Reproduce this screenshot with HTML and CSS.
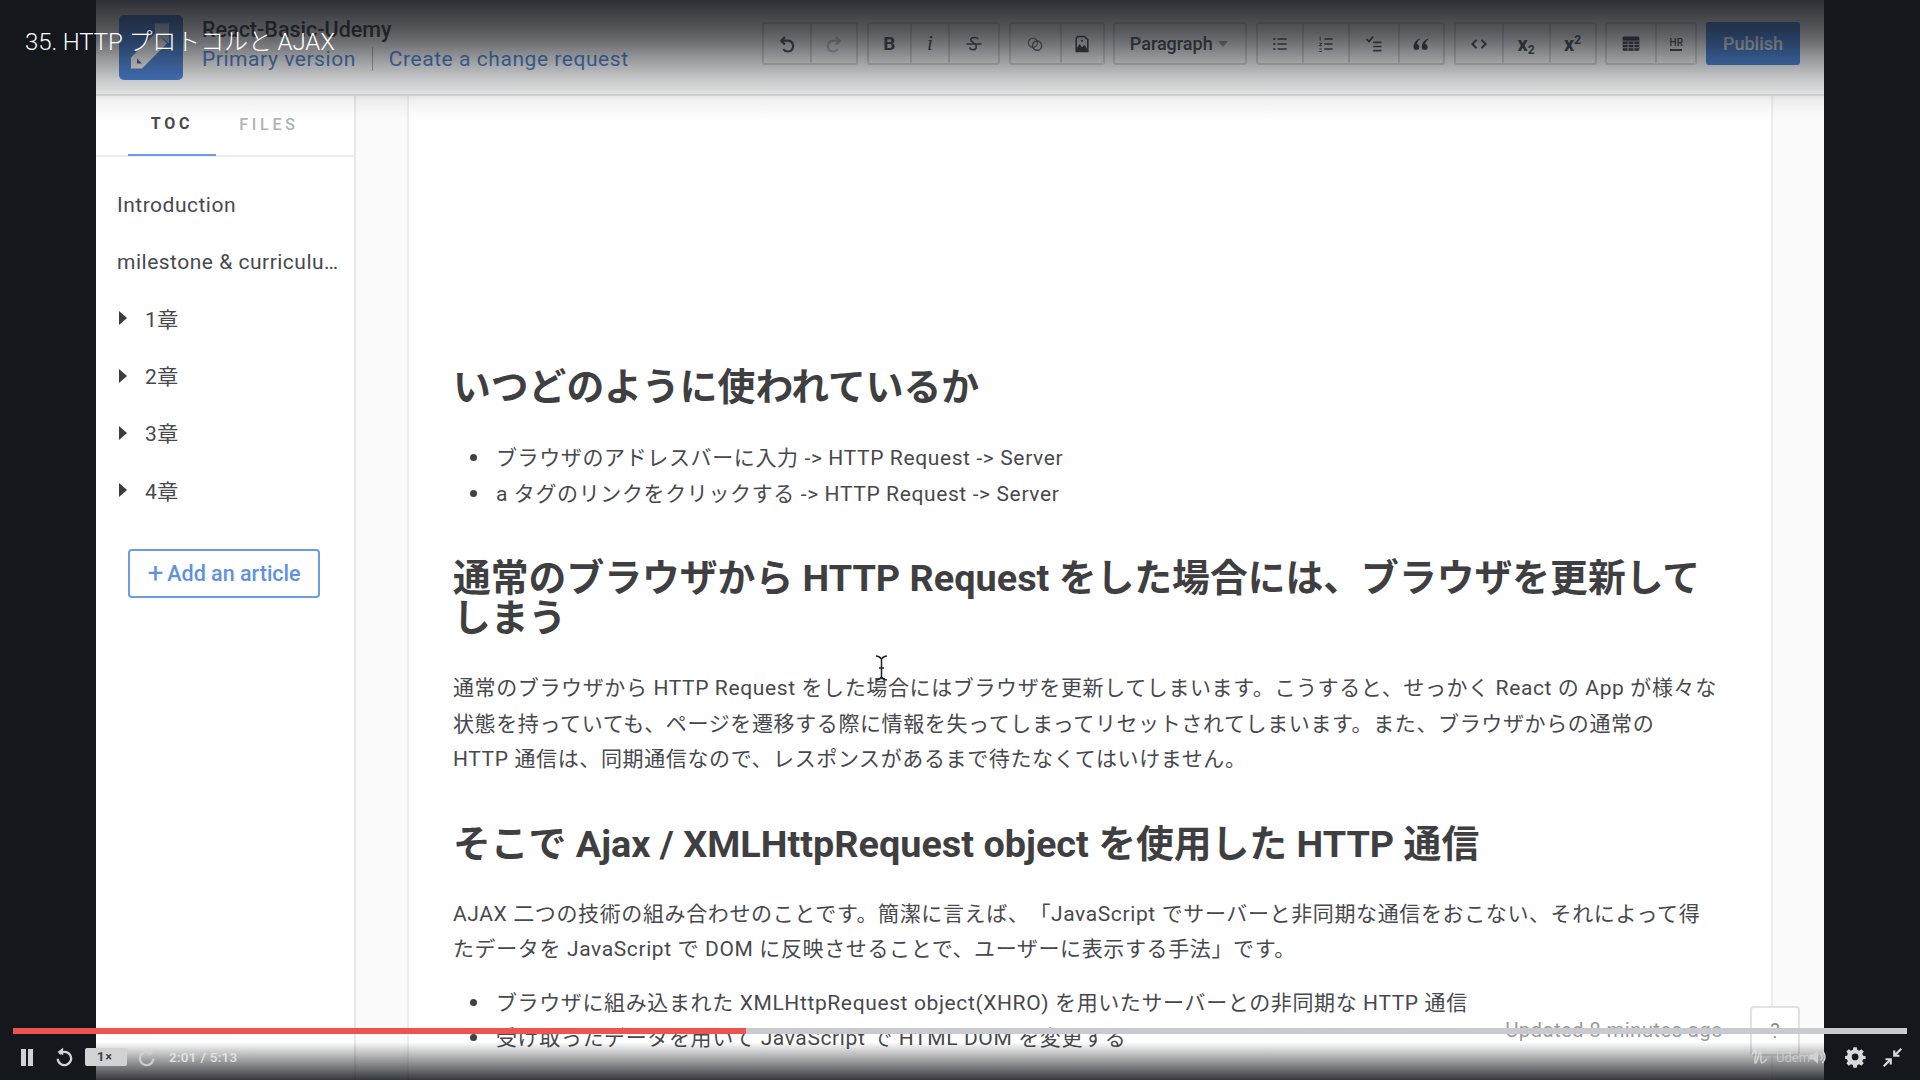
FILE: index.html
```html
<!DOCTYPE html>
<html lang="ja">
<head>
<meta charset="utf-8">
<title>35. HTTP プロトコルと AJAX</title>
<link rel="stylesheet" href="styles.css">
</head>
<body>
<div class="player">
  <div class="app">
    <header class="topbar">
      <div class="logo">
        <svg viewBox="0 0 64 64" width="64" height="65"><path d="M12 53V42L37 17l11 11-25 25z" fill="#fff"/><path d="M18 48v-5l5 5z" fill="#3f6fb8"/><path d="M36 8h14v20l-7-6-7 6z" fill="#cfe0f5"/></svg>
      </div>
      <div class="brand">
        <div class="brand-name">React-Basic-Udemy</div>
        <div class="brand-links"><a>Primary version</a><i class="sep"></i><a>Create a change request</a></div>
      </div>
      <div class="toolbar">
        <div class="group">
          <span class="tbtn w46"><svg viewBox="0 0 24 24"><path d="M9.500 3.500L5 8l4.500 4.500M5 8h8a6.500 6.500 0 1 1-5.500 10" fill="none" stroke="#4c4f57" stroke-width="2.600"/></svg></span>
          <span class="tbtn w46"><svg viewBox="0 0 24 24"><path d="M14.500 3.500L19 8l-4.500 4.500M19 8h-8a6.500 6.500 0 1 0 5.500 10" fill="none" stroke="#c9c9cb" stroke-width="2.600"/></svg></span>
        </div>
        <div class="group">
          <span class="tbtn w41 bold">B</span>
          <span class="tbtn w38 ital">i</span>
          <span class="tbtn w50"><svg viewBox="0 0 24 24"><path d="M3 12h18M17 6c-1-2-9-3-9 1 0 2 3 3 5 5 3 2 2 7-2 7-2 0-4-1-4-3" fill="none" stroke="#4c4f57" stroke-width="1.800"/></svg></span>
        </div>
        <div class="group">
          <span class="tbtn w49"><svg viewBox="0 0 24 24"><circle cx="9.500" cy="10.500" r="5.500" fill="none" stroke="#8a8c91" stroke-width="1.800"/><circle cx="14.500" cy="14" r="5.500" fill="none" stroke="#6a6c72" stroke-width="1.800"/></svg></span>
          <span class="tbtn w43"><svg viewBox="0 0 24 24"><path d="M7 3h8l4 4v14H5V5z" fill="none" stroke="#3e4149" stroke-width="1.800"/><path d="M5 21v-3l4-6 3 4 3-3 4 6v2z" fill="#3e4149"/><circle cx="12" cy="8" r="1.200" fill="#3e4149"/></svg></span>
        </div>
        <div class="group">
          <span class="tbtn para">Paragraph<i class="caret"></i></span>
        </div>
        <div class="group">
          <span class="tbtn w44"><svg viewBox="0 0 24 24"><path d="M9 6h11M9 12h11M9 18h11" stroke="#4c4f57" stroke-width="2"/><path d="M4 6h2.500M4 12h2.500M4 18h2.500" stroke="#4c4f57" stroke-width="2.200"/></svg></span>
          <span class="tbtn w46"><svg viewBox="0 0 24 24"><path d="M10 6h10M10 12h10M10 18h10" stroke="#4c4f57" stroke-width="2"/><path d="M5 3v5M4 11h3l-3 3h3M4 18h3M4 21h3" stroke="#4c4f57" stroke-width="1.200" fill="none"/></svg></span>
          <span class="tbtn w50"><svg viewBox="0 0 24 24"><path d="M11 10h10M11 15h10M11 20h10" stroke="#4c4f57" stroke-width="2"/><path d="M3 6l3 3 5-6" stroke="#3e4149" stroke-width="2" fill="none"/></svg></span>
          <span class="tbtn w45"><svg viewBox="0 0 24 24"><path d="M11 5C6 7 3 11 3 15.500a3.500 3.500 0 1 0 7 0 3.500 3.500 0 0 0-3-3.400c.4-2.400 2-4.800 4-6.100zM21 5c-5 2-8 6-8 10.500a3.500 3.500 0 1 0 7 0 3.500 3.500 0 0 0-3-3.400c.4-2.400 2-4.800 4-6.100z" fill="#3e4149"/></svg></span>
        </div>
        <div class="group">
          <span class="tbtn w46"><svg viewBox="0 0 24 24"><path d="M9 7l-5 5 5 5M15 7l5 5-5 5" fill="none" stroke="#4c4f57" stroke-width="2.400"/></svg></span>
          <span class="tbtn w47 sub">x<sub>2</sub></span>
          <span class="tbtn w46 sub">x<sup>2</sup></span>
        </div>
        <div class="group">
          <span class="tbtn w48"><svg viewBox="0 0 24 24"><rect x="2" y="3" width="20" height="17" rx="1.500" fill="#3e4149"/><path d="M2 8.500h20M2 12.500h20M2 16.500h20M8.500 8.500V20M15.500 8.500V20" stroke="#dadadc" stroke-width="1.200"/></svg></span>
          <span class="tbtn w40 hr"><b>HR</b><i></i></span>
        </div>
        <button class="publish">Publish</button>
      </div>
    </header>
    <div class="main">
      <aside class="sidebar">
        <div class="tabs"><span class="tab active">TOC</span><span class="tab second">FILES</span></div>
        <ul class="toc">
          <li>Introduction</li>
          <li>milestone &amp; curriculu…</li>
          <li class="chap"><i class="tri"></i>1章</li>
          <li class="chap"><i class="tri"></i>2章</li>
          <li class="chap"><i class="tri"></i>3章</li>
          <li class="chap"><i class="tri"></i>4章</li>
        </ul>
        <div class="add"><span class="plus">+</span>Add an article</div>
      </aside>
      <div class="gutter">
        <article class="paper">
          <h2 class="first">いつどのように使われているか</h2>
          <ul>
            <li>ブラウザのアドレスバーに入力 -&gt; HTTP Request -&gt; Server</li>
            <li>a タグのリンクをクリックする -&gt; HTTP Request -&gt; Server</li>
          </ul>
          <h2>通常のブラウザから HTTP Request をした場合には、ブラウザを更新してしまう</h2>
          <p>通常のブラウザから HTTP Request をした場合にはブラウザを更新してしまいます。こうすると、せっかく React の App が様々な状態を持っていても、ページを遷移する際に情報を失ってしまってリセットされてしまいます。また、ブラウザからの通常の HTTP&nbsp;通信は、同期通信なので、レスポンスがあるまで待たなくてはいけません。</p>
          <h2>そこで Ajax / XMLHttpRequest object を使用した HTTP 通信</h2>
          <p>AJAX 二つの技術の組み合わせのことです。簡潔に言えば、「JavaScript でサーバーと非同期な通信をおこない、それによって得たデータを JavaScript で DOM に反映させることで、ユーザーに表示する手法」です。</p>
          <ul>
            <li>ブラウザに組み込まれた XMLHttpRequest object(XHRO) を用いたサーバーとの非同期な HTTP 通信</li>
            <li>受け取ったデータを用いて JavaScript で HTML DOM を変更する</li>
          </ul>
        </article>
      </div>
    </div>
    <div class="updated">Updated 8 minutes ago</div>
    <div class="help">?</div>
  </div>

  <div class="shade-top"></div>
  <div class="shade-bottom"></div>
  <div class="video-title">35. HTTP プロトコルと AJAX</div>
  <svg class="cursor" viewBox="0 0 13 26" width="13" height="26"><path d="M1 1c3 0 4 1 5.500 3C8 2 9 1 12 1M6.500 4v18M1 25c3 0 4-1 5.500-3 1.500 2 2.500 3 5.500 3M4 13h5" fill="none" stroke="#222" stroke-width="1.500"/></svg>

  <div class="controls">
    <div class="progress"><div class="progress-fill"></div></div>
    <div class="ctl-row">
      <span class="pause"><i></i><i></i></span>
      <svg class="ctl-ico undo" viewBox="0 0 24 24" width="20" height="20"><path d="M6.500 8.500A8 8 0 1 1 4.500 14" fill="none" stroke="#d1d2d3" stroke-width="2.800"/><path d="M11 1v9L4 6z" fill="#d1d2d3"/></svg>
      <span class="speed">1<small>×</small></span>
      <svg class="ctl-ico redo" viewBox="0 0 24 24" width="20" height="20"><path d="M17.500 8.500A8 8 0 1 0 19.500 14" fill="none" stroke="#d1d2d3" stroke-width="2.800"/><path d="M13 1v9l7-4z" fill="#d1d2d3"/></svg>
      <span class="time">2:01 / 5:13</span>
      <span class="spacer"></span>
      <svg class="ctl-ico wm" viewBox="0 0 22 22" width="22" height="22"><path d="M2 9c2-5 4-6 4-2 0 4-2 8-1 10 1 1 3-5 4-9 1-3 2-2 2 1 0 3-1 7 1 8 2 0 3-2 5-4" fill="none" stroke="#e3e3e4" stroke-width="1.600"/></svg>
      <span class="udemy">Udem</span>
      <svg class="ctl-ico vol" viewBox="0 0 24 24" width="20" height="20"><path d="M2 9h4l6-5v16l-6-5H2z" fill="#d1d2d3"/><path d="M15 8a5 5 0 0 1 0 8M17 5a9 9 0 0 1 0 14" fill="none" stroke="#d1d2d3" stroke-width="1.800"/></svg>
      <svg class="ctl-ico gear" viewBox="0 0 24 24" width="21" height="21"><path fill-rule="evenodd" fill="#d8d9da" d="M10 1h4l.6 3 2.300 1 2.600-1.700 2.800 2.800L20.600 8.700l1 2.300 3 .6v3l-3 .6-1 2.300 1.700 2.600-2.800 2.800-2.600-1.700-2.300 1-.6 3h-4l-.6-3-2.300-1-2.600 1.700-2.800-2.800 1.700-2.600-1-2.300-3-.6v-3l3-.6 1-2.300-1.700-2.600 2.800-2.800L7.100 5l2.300-1zM12 8.500a4 4 0 1 0 0 8 4 4 0 0 0 0-8z" transform="translate(0 -.6) scale(.96)"/></svg>
      <svg class="ctl-ico shrink" viewBox="0 0 24 24" width="21" height="21"><path d="M14 10L22 2M14 4v6h6M10 14L2 22M4 14h6v6" fill="none" stroke="#d8d9da" stroke-width="2.500"/></svg>
    </div>
  </div>
</div>
</body>
</html>
```
FILE: styles.css
```css
* { box-sizing: border-box; }
html, body { margin: 0; height: 100%; }
body { font-family: Roboto, "Noto Sans CJK JP", sans-serif; background: #14171c; overflow: hidden; }
.player { position: relative; width: 1920px; height: 1080px; overflow: hidden; background: #14171c; }
.app { position: relative; width: 1728px; height: 1080px; margin-left: 96px; background: #fff; display: flex; flex-direction: column; overflow: hidden; }

.topbar { height: 96px; flex: none; display: flex; align-items: flex-start; padding: 15px 24px 0 23px; background: #fff; border-bottom: 2px solid #e6e6e6; }
.logo { width: 64px; height: 65px; border-radius: 5px; background: #4c84d8; flex: none; overflow: hidden; }
.logo svg { display: block; }
.brand { margin-left: 19px; margin-top: 3px; flex: none; }
.brand-name { font-size: 21.500px; font-weight: 500; line-height: 24px; color: #3e3e42; white-space: nowrap; }
.brand-links { display: flex; align-items: center; font-size: 21px; line-height: 28px; color: #4f84d6; letter-spacing: .55px; margin-top: 3px; white-space: nowrap; }
.sep { width: 1px; height: 24px; background: #b5b5b5; margin: 0 16px 0 16px; }

.toolbar { display: flex; align-items: flex-start; gap: 8.700px; margin-left: auto; padding-top: 7px; }
.group { display: flex; height: 43px; border: 2px solid #dcdcdc; border-radius: 3px; background: #fff; }
.tbtn { display: flex; align-items: center; justify-content: center; height: 100%; border-left: 2px solid #dcdcdc; color: #4a4d55; font-size: 17px; }
.tbtn:first-child { border-left: 0; }
.tbtn svg { width: 20px; height: 20px; }
.w38 { width: 38px; } .w40 { width: 40px; } .w41 { width: 41px; } .w43 { width: 43px; } .w44 { width: 44px; } .w45 { width: 45px; }
.w46 { width: 46px; } .w47 { width: 47px; } .w48 { width: 48px; } .w49 { width: 49px; } .w50 { width: 50px; }
.bold { font-weight: 700; font-size: 19px; }
.ital { font-style: italic; font-family: "Liberation Serif", serif; font-size: 21px; }
.para { width: 130px; padding-right: 3px; font-size: 18px; font-weight: 500; gap: 4px; white-space: nowrap; color: #4a4d55; }
.caret { width: 0; height: 0; border: 5px solid transparent; border-top: 6px solid #a5a6a9; border-bottom: 0; margin-left: 1px; }
.sub { font-weight: 700; font-size: 20px; color: #4a4d55; align-items: center; }
.sub sub, .sub sup { font-size: 12px; line-height: 0; }
.sub sub { position: relative; top: 6px; vertical-align: baseline; }
.sub sup { position: relative; top: -4px; vertical-align: baseline; }
.hr { flex-direction: column; gap: 1px; }
.hr b { font-size: 10px; line-height: 11px; font-weight: 500; }
.hr i { width: 12px; height: 2px; background: #4a4d55; }
.publish { height: 43px; width: 94px; border: 0; border-radius: 3px; background: #4b86dc; color: #f2f5fa; font: 500 18px Roboto, sans-serif; }

.main { flex: 1; display: flex; min-height: 0; }
.sidebar { width: 260px; flex: none; background: #fff; border-right: 2px solid #e9e9e9; }
.tabs { height: 61px; display: flex; padding-left: 32px; border-bottom: 2px solid #eee; }
.tab { width: 88px; height: 60px; display: flex; align-items: center; justify-content: center; padding-bottom: 3px; font-size: 16px; font-weight: 700; letter-spacing: 3.800px; color: #b0b2b6; }
.tab.active { color: #47494d; border-bottom: 2px solid #6d9ce4; }
.tab.second { width: 106px; font-weight: 500; }
.toc { list-style: none; margin: 0; padding: 20px 6px 0 21px; }
.toc li { height: 57.300px; line-height: 57px; font-size: 21px; color: #47494d; white-space: nowrap; letter-spacing: .5px; }
.toc li.chap { display: flex; align-items: center; }
.tri { width: 0; height: 0; border-left: 8px solid #3a3c40; border-top: 7.500px solid transparent; border-bottom: 7.500px solid transparent; margin: -4px 18px 0 2px; flex: none; }
.add { width: 192px; height: 49px; margin: 28px 0 0 32px; border: 2px solid #6d9ce4; border-radius: 4px; color: #5e91e2; font-size: 21.500px; font-weight: 500; display: flex; align-items: center; justify-content: center; }
.plus { font-size: 28px; font-weight: 400; line-height: 20px; margin-right: 4px; }

.gutter { flex: 1; background: #fbfbfb; padding: 0 51px 0 51px; min-width: 0; }
.paper { height: 100%; background: #fff; border-left: 2px solid #eeeeef; border-right: 2px solid #eeeeef; padding: 271px 50px 0 44px; color: #47494d; font-size: 21px; line-height: 35.500px; letter-spacing: .62px; text-spacing-trim: space-all; }
.paper h2 { font-size: 37.800px; font-weight: 700; line-height: 40px; color: #3f3f42; margin: 46px 0 0; letter-spacing: 0; }
.paper h2.first { margin-top: 0; }
.paper p { margin: 33px 0 0; }
.paper ul { margin: 34px 0 0; padding-left: 43px; list-style: none; }
.paper p + ul { margin-top: 18px; }
.paper p + h2 { margin-top: 46px; }
.paper li::before { content: ""; display: inline-block; width: 7px; height: 7px; border-radius: 50%; background: #3f4145; margin: 0 19px 3px -26px; vertical-align: middle; }

.updated { position: absolute; right: 101px; top: 1018px; font-size: 20.500px; color: #9c9c9c; letter-spacing: .3px; line-height: 24px; background: #fff; }
.help { position: absolute; right: 24px; top: 1006px; width: 50px; height: 50px; border: 2px solid #e2e2e2; border-radius: 4px; background: #fff; color: #8a8a8a; font-size: 20px; font-weight: 400; display: flex; align-items: center; justify-content: center; }

.shade-top { position: absolute; left: 0; top: 0; width: 1824px; height: 120px; background: linear-gradient(to bottom, rgba(20,23,28,.89) 0, rgba(20,23,28,.72) 25%, rgba(20,23,28,.62) 35%, rgba(20,23,28,.38) 54%, rgba(20,23,28,.23) 67%, rgba(20,23,28,.14) 77%, rgba(20,23,28,.05) 85%, rgba(20,23,28,0) 100%); pointer-events: none; }
.shade-bottom { position: absolute; left: 0; bottom: 0; width: 1824px; height: 38px; background: linear-gradient(to top, rgba(20,23,28,.86) 0, rgba(20,23,28,0) 100%); pointer-events: none; }
.video-title { position: absolute; left: 25px; top: 25px; color: #fff; font-size: 24px; line-height: 34px; font-weight: 300; white-space: nowrap; letter-spacing: -.1px; }
.cursor { position: absolute; left: 875px; top: 655px; }

.controls { position: absolute; left: 0; right: 0; top: 1028px; height: 52px; }
.progress { position: absolute; left: 13px; top: 0; width: 1894px; height: 6px; background: #c8cacd; }
.progress-fill { width: 733px; height: 100%; background: #ef5350; }
.ctl-row { position: absolute; left: 0; right: 0; top: 6px; height: 46px; display: flex; align-items: center; padding: 0 17px 0 21px; }
.pause { display: flex; gap: 2px; }
.pause i { width: 5px; height: 17px; background: #d1d2d3; display: block; }
.ctl-ico { flex: none; }
.undo { margin-left: 21px; }
.speed { width: 42px; height: 18px; margin-left: 11px; background: #d1d2d3; border-radius: 2px; color: #3a3d44; font-size: 13px; font-weight: 700; padding-left: 12px; line-height: 18px; }
.speed small { font-size: 12px; margin-left: 1px; }
.redo { margin-left: 10px; opacity: .9; }
.time { margin-left: 12px; color: #e2e3e5; font-size: 13.500px; font-weight: 500; letter-spacing: .3px; }
.spacer { flex: 1; }
.wm { opacity: .7; }
.udemy { color: #d6d7d9; font-size: 13px; opacity: .7; margin: 0 -2px 0 4px; width: 34px; overflow: hidden; }
.vol { margin-right: 17px; }
.gear { margin-right: 16px; }
```
